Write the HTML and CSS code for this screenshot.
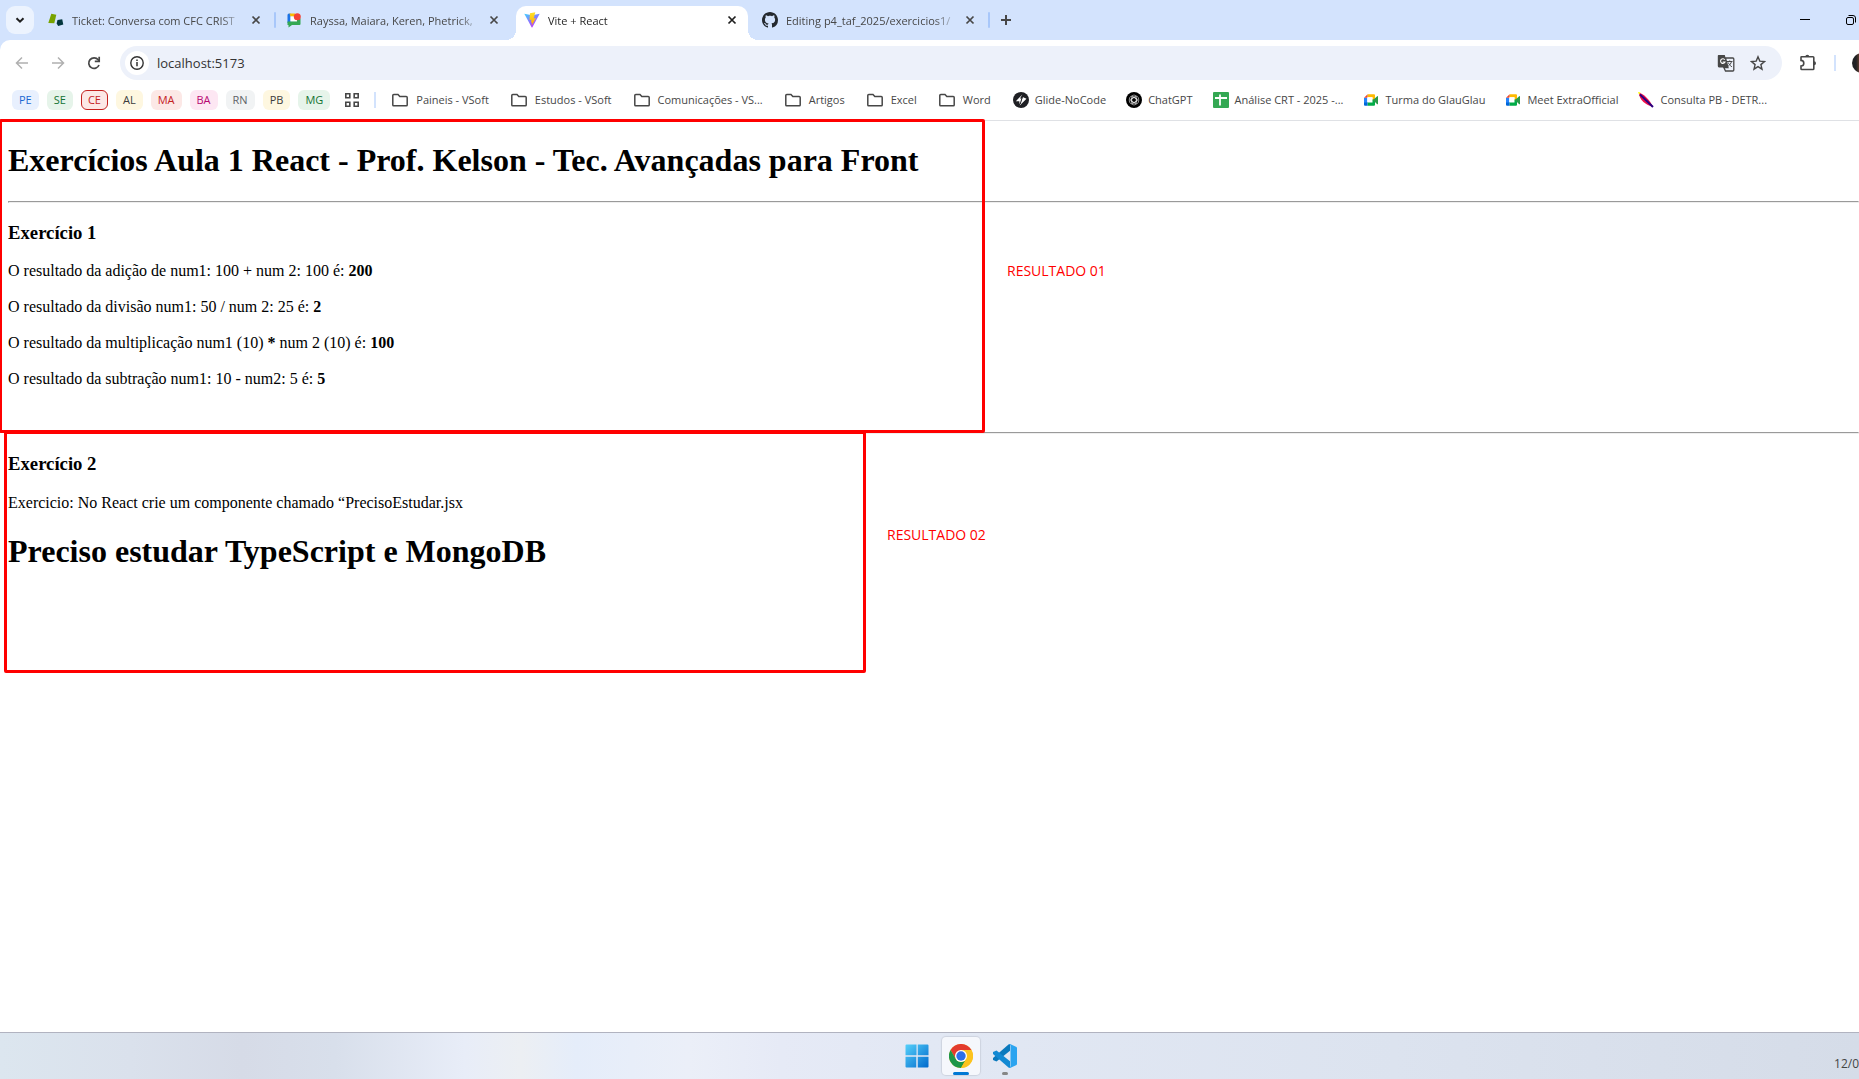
FILE: index.html
```html
<!DOCTYPE html>
<html lang="pt-BR">
<head>
<meta charset="utf-8">
<title>Vite + React</title>
<link rel="stylesheet" href="styles.css">
</head>
<body>
<svg class="defs" width="0" height="0" aria-hidden="true">
  <symbol id="close" viewBox="0 0 16 16"><path d="M4.5 4.5l7 7M11.500 4.500l-7 7" fill="none" stroke="currentColor" stroke-width="1.700"/></symbol>
  <symbol id="folder" viewBox="0 0 16 16"><path d="M.8 13V3.500a1 1 0 0 1 1-1H6l1.800 2h6.400a1 1 0 0 1 1 1V13a.8.8 0 0 1-.8.8H1.600A.8.800 0 0 1 .8 13z" fill="none" stroke="#474747" stroke-width="1.500"/></symbol>
  <symbol id="meet" viewBox="0 0 16 16"><path d="M1 5.800h3.500V11H1z" fill="#2684fc"/><path d="M1 5.800L4.700 2.300v3.500z" fill="#ea4335"/><path d="M4.700 2.300h6.300a1 1 0 0 1 1 1v4.200L9.500 8.500V5.300H4.700z" fill="#ffba00"/><path d="M4.200 5.300h5.300v5.200H4.200z" fill="#fff"/><path d="M1 10.500h3.700v3.300H2a1 1 0 0 1-1-1z" fill="#0066da"/><path d="M4.700 10.500h4.800V7.500H12v5.300a1 1 0 0 1-1 1H4.700z" fill="#00ac47"/><path d="M10 8l4.200-3.800c.4-.3.800-.1.800.4v7.200c0 .5-.4.700-.8.400z" fill="#2c9a48"/></symbol>
</svg>

<header class="browser">
  <div class="tabstrip">
    <button class="tab-search" aria-label="Pesquisar guias"><svg width="12" height="12" viewBox="0 0 12 12"><path d="M2.500 4.200L6 7.700l3.500-3.500" fill="none" stroke="#1f1f1f" stroke-width="2"/></svg></button>
    <nav class="tabs">
      <div class="tab">
        <svg class="ico" viewBox="0 0 16 16"><path d="M3.300 1.800l5 1-2 8.500-6-.3z" fill="#78a300"/><path d="M9.500 8l4.700-.8 1.100 5.200-5.100 1.500-1.600-2.400z" fill="#03363d"/></svg>
        <a class="tab-title" href="#">Ticket: Conversa com CFC CRIST</a>
        <button class="tab-close" aria-label="Fechar"><svg class="ico"><use href="#close"/></svg></button>
      </div>
      <span class="tab-sep line"></span>
      <div class="tab">
        <svg class="ico" viewBox="0 0 16 16"><path d="M1.500 3a1.500 1.500 0 0 1 1.500-1.500h1.500V11h-3z" fill="#1a73e8"/><path d="M3.500 1.500H9v3H4.500z" fill="#fbbc04"/><path d="M4.500 4.500H11V9.500H4.500z" fill="#fff"/><path d="M1.500 9.500h9.500V6.500h3.500V12a1 1 0 0 1-1 1H6l-3.500 2.500V13h-1z" fill="#34a853"/><circle cx="11.300" cy="4.700" r="3.500" fill="#f44336"/></svg>
        <a class="tab-title" href="#">Rayssa, Maiara, Keren, Phetrick,</a>
        <button class="tab-close" aria-label="Fechar"><svg class="ico"><use href="#close"/></svg></button>
      </div>
      <span class="tab-sep"></span>
      <div class="tab active">
        <svg class="ico" viewBox="0 0 16 16"><defs><linearGradient id="v" x1="0" y1="0" x2=".6" y2="1"><stop stop-color="#41d1ff"/><stop offset="1" stop-color="#bd34fe"/></linearGradient><linearGradient id="b" x1="0" y1="0" x2="0" y2="1"><stop stop-color="#ffe227"/><stop offset="1" stop-color="#ffa800"/></linearGradient></defs><path d="M.3 1.800L8 3.200l7.700-1.400L8.400 15.300a.5.500 0 0 1-.8 0z" fill="url(#v)"/><path d="M11.300.3L6 1.300l-.5 6.800 2-.4-.6 3 1.300-.4-.6 3.400L12 6l-2.300.4z" fill="url(#b)"/></svg>
        <a class="tab-title" href="#">Vite + React</a>
        <button class="tab-close" aria-label="Fechar"><svg class="ico"><use href="#close"/></svg></button>
      </div>
      <span class="tab-sep"></span>
      <div class="tab">
        <svg class="ico" viewBox="0 0 16 16"><path fill="#24292f" d="M8 0C3.580 0 0 3.580 0 8c0 3.540 2.290 6.530 5.470 7.590.4.070.55-.17.55-.38 0-.19-.01-.82-.01-1.490-2.010.37-2.530-.49-2.690-.94-.09-.23-.48-.94-.82-1.130-.28-.15-.68-.52-.01-.53.63-.01 1.080.58 1.230.82.72 1.210 1.870.87 2.330.66.070-.52.280-.87.510-1.070-1.780-.2-3.640-.89-3.640-3.950 0-.87.310-1.590.82-2.150-.08-.2-.36-1.020.08-2.120 0 0 .67-.21 2.200.82.640-.18 1.320-.27 2-.27s1.360.09 2 .27c1.530-1.040 2.200-.82 2.200-.82.440 1.100.16 1.920.08 2.120.51.560.82 1.270.82 2.150 0 3.070-1.870 3.750-3.650 3.950.29.25.54.73.54 1.480 0 1.070-.01 1.930-.01 2.200 0 .21.150.46.550.38A8.010 8.010 0 0 0 16 8c0-4.420-3.580-8-8-8z"/></svg>
        <a class="tab-title" href="#">Editing p4_taf_2025/exercicios1/</a>
        <button class="tab-close" aria-label="Fechar"><svg class="ico"><use href="#close"/></svg></button>
      </div>
      <span class="tab-sep line"></span>
    </nav>
    <button class="new-tab" aria-label="Nova guia"><svg class="ico" viewBox="0 0 16 16"><path d="M8 3v10M3 8h10" stroke="#474747" stroke-width="2"/></svg></button>
    <div class="window-controls">
      <button aria-label="Minimizar"><svg width="12" height="12" viewBox="0 0 12 12"><path d="M1 5.500h10" stroke="#000"/></svg></button>
      <button aria-label="Restaurar"><svg width="12" height="12" viewBox="0 0 12 12"><rect x="1.500" y="3.500" width="7" height="7" rx="1.500" fill="none" stroke="#000"/><path d="M3.500 1.500H8A2.500 2.500 0 0 1 10.500 4v4.500" fill="none" stroke="#000"/></svg></button>
    </div>
  </div>

  <div class="chrome-panel">
    <div class="toolbar">
      <button class="tool faded" aria-label="Voltar"><svg class="ico" viewBox="0 0 16 16"><path d="M14 8H3M8 2.500L2.500 8 8 13.500" fill="none" stroke="currentColor" stroke-width="1.500"/></svg></button>
      <button class="tool faded" aria-label="Avançar"><svg class="ico" viewBox="0 0 16 16"><path d="M2 8h11M8 2.500L13.500 8 8 13.500" fill="none" stroke="currentColor" stroke-width="1.500"/></svg></button>
      <button class="tool" aria-label="Recarregar"><svg class="ico" viewBox="0 0 16 16"><path d="M13 10a5.300 5.300 0 1 1-.8-5.200L13 5.800" fill="none" stroke="currentColor" stroke-width="1.700"/><path d="M13.200 1.800v4.500H8.800" fill="none" stroke="currentColor" stroke-width="1.700"/></svg></button>
      <div class="omnibox">
        <button class="site-info" aria-label="Informações do site"><svg class="ico" viewBox="0 0 16 16"><circle cx="8" cy="8" r="6.200" fill="none" stroke="#333" stroke-width="1.400"/><path d="M8 7v4.200M8 4.500v1.500" stroke="#333" stroke-width="1.500"/></svg></button>
        <input class="url" type="text" value="localhost:5173" aria-label="Endereço">
        <button class="omni-btn" aria-label="Traduzir"><svg width="18" height="18" viewBox="0 0 18 18"><path d="M1.500 1h6.300l3.200 12.500H2A1.500 1.500 0 0 1 .8 12V2A1 1 0 0 1 1.500 1z" fill="#474747"/><path d="M8.500 4h7.300a1 1 0 0 1 1 1v11a1 1 0 0 1-1 1H8.500L6.800 13.500h4.200z" fill="#edf1fa" stroke="#474747" stroke-width="1.300"/><path d="M7.800 5.800A2.300 2.300 0 1 0 8 8H5.700" fill="none" stroke="#fff" stroke-width="1.100"/><path d="M10 7.500h5.500M12.700 6.500v1M14.500 7.500c-.5 2-1.700 3.500-3.200 4.500M11.200 8.500c.7 1.700 2 3.200 3.700 4.300" stroke="#474747" fill="none"/></svg></button>
        <button class="omni-btn" aria-label="Favoritar"><svg class="ico" viewBox="0 0 16 16"><path d="M8 1.800l1.800 4.300 4.700.4-3.600 3.100 1.100 4.600L8 11.700l-4 2.500 1.100-4.600L1.500 6.500l4.700-.4z" fill="none" stroke="#474747" stroke-width="1.400"/></svg></button>
      </div>
      <button class="tool" aria-label="Extensões"><svg width="18" height="18" viewBox="0 0 18 18"><path d="M2.500 2.800H14a.8.800 0 0 1 .8.800V14.700a.8.800 0 0 1-.8.800H2.800a.8.800 0 0 1-.8-.8V12a2.800 2.800 0 0 0 0-5.600V3.300a.5.500 0 0 1 .5-.5z" fill="none" stroke="#474747" stroke-width="1.600"/><path d="M6.300 2.800a2 2 0 0 1 4 0zM15 7.200a2 2 0 0 1 0 4z" fill="#474747"/></svg></button>
      <span class="tool-sep"></span>
      <span class="avatar"></span>
    </div>

    <nav class="bookmarks">
      <div class="groups">
        <a class="chip blue" href="#">PE</a><a class="chip green" href="#">SE</a><a class="chip red open" href="#">CE</a><a class="chip yellow" href="#">AL</a><a class="chip red" href="#">MA</a><a class="chip pink" href="#">BA</a><a class="chip grey" href="#">RN</a><a class="chip yellow" href="#">PB</a><a class="chip green" href="#">MG</a>
      </div>
      <button class="apps" aria-label="Grupos de guias"><svg class="ico" viewBox="0 0 16 16"><path d="M1.800 1.800h4v4h-4zM10.200 1.800h4v4h-4zM1.800 10.200h4v4h-4zM10.200 10.200h4v4h-4z" fill="none" stroke="#474747" stroke-width="1.600"/></svg></button>
      <span class="bar-sep"></span>
      <div class="links">
        <a class="mark folder" href="#"><svg class="ico"><use href="#folder"/></svg>Paineis - VSoft</a>
        <a class="mark folder" href="#"><svg class="ico"><use href="#folder"/></svg>Estudos - VSoft</a>
        <a class="mark folder" href="#"><svg class="ico"><use href="#folder"/></svg>Comunicações - VS...</a>
        <a class="mark folder" href="#"><svg class="ico"><use href="#folder"/></svg>Artigos</a>
        <a class="mark folder" href="#"><svg class="ico"><use href="#folder"/></svg>Excel</a>
        <a class="mark folder" href="#"><svg class="ico"><use href="#folder"/></svg>Word</a>
        <a class="mark" href="#"><svg class="ico" viewBox="0 0 16 16"><circle cx="8" cy="8" r="8" fill="#1f2024"/><path d="M9.300 2.500L2.800 9.300h3.500L6.500 12l1.300-1.300L9 6.500H7z" fill="#fff"/><path d="M9.700 5l3.800 1.700-6.800 6.800 1.700-4.600z" fill="#fff"/><path d="M9.800 3.500L7.200 12" stroke="#1f2024"/></svg>Glide-NoCode</a>
        <a class="mark" href="#"><svg class="ico" viewBox="0 0 16 16"><circle cx="8" cy="8" r="8" fill="#000"/><g fill="none" stroke="#ddd" stroke-width=".6"><rect x="5.500" y="3" width="5" height="7.500" rx="2.500"/><rect x="5.500" y="3" width="5" height="7.500" rx="2.500" transform="rotate(60 8 8)"/><rect x="5.500" y="3" width="5" height="7.500" rx="2.500" transform="rotate(120 8 8)"/><rect x="5.500" y="3" width="5" height="7.500" rx="2.500" transform="rotate(180 8 8)"/><rect x="5.500" y="3" width="5" height="7.500" rx="2.500" transform="rotate(240 8 8)"/><rect x="5.500" y="3" width="5" height="7.500" rx="2.500" transform="rotate(300 8 8)"/></g></svg>ChatGPT</a>
        <a class="mark" href="#"><svg class="ico" viewBox="0 0 16 16"><rect width="16" height="16" rx="1" fill="#34a853"/><path d="M2 6h12M7 2.500v11" stroke="#fff" stroke-width="1.800"/></svg>Análise CRT - 2025 -...</a>
        <a class="mark" href="#"><svg class="ico"><use href="#meet"/></svg>Turma do GlauGlau</a>
        <a class="mark" href="#"><svg class="ico"><use href="#meet"/></svg>Meet ExtraOfficial</a>
        <a class="mark" href="#"><svg class="ico" viewBox="0 0 16 16"><path d="M1 1c4 0 11 7 14 14C8 13 1 8 1 1z" fill="#f0104a"/><path d="M2 2.500l13 12.500" stroke="#2a0080" stroke-width="2"/><path d="M0 0l2.500.5L1 2.500z" fill="#ff0"/></svg>Consulta PB - DETR...</a>
      </div>
    </nav>
  </div>
</header>

<main class="page">
  <h1>Exercícios Aula 1 React - Prof. Kelson - Tec. Avançadas para Front</h1>
  <hr>
  <h3>Exercício 1</h3>
  <p>O resultado da adição de num1: 100 + num 2: 100 é: <b>200</b></p>
  <p>O resultado da divisão num1: 50 / num 2: 25 é: <b>2</b></p>
  <p>O resultado da multiplicação num1 (10) <b>*</b> num 2 (10) é: <b>100</b></p>
  <p>O resultado da subtração num1: 10 - num2: 5 é: <b>5</b></p>
  <br>
  <hr>
  <h3>Exercício 2</h3>
  <p>Exercicio: No React crie um componente chamado “PrecisoEstudar.jsx</p>
  <h1>Preciso estudar TypeScript e MongoDB</h1>

  <div class="frame frame-1"></div>
  <div class="frame frame-2"></div>
  <span class="note note-1">RESULTADO 01</span>
  <span class="note note-2">RESULTADO 02</span>
</main>

<footer class="taskbar">
  <div class="apps-row">
    <button class="app" aria-label="Iniciar"><svg width="24" height="24" viewBox="0 0 24 24"><defs><linearGradient id="w" x1="0" y1="0" x2="1" y2="1"><stop stop-color="#55d0fa"/><stop offset="1" stop-color="#0069cc"/></linearGradient></defs><path d="M1.500.500H12v11H.5v-10a1 1 0 0 1 1-1zM12.500.500h10a1 1 0 0 1 1 1v10h-11zM.5 12.500h11v11h-10a1 1 0 0 1-1-1zM12.500 12.500h11v10a1 1 0 0 1-1 1h-10z" fill="url(#w)"/><path d="M12 0v24M0 12h24" stroke="#e1e7f3"/></svg></button>
    <button class="app current" aria-label="Google Chrome"><svg width="24" height="24" viewBox="0 0 24 24"><circle cx="12" cy="12" r="12" fill="#fcc934"/><path d="M12 6h10.400A12 12 0 0 0 1.600 6l5.200 9z" fill="#e33b2e"/><path d="M1.600 6A12 12 0 0 0 12 24l5.200-9A6 6 0 0 1 6.800 15z" fill="#1e9648"/><path d="M22.400 6H12l5.200 9L12 24A12 12 0 0 0 22.400 6z" fill="#fcc31e"/><circle cx="12" cy="12" r="6" fill="#fff"/><circle cx="12" cy="12" r="4.700" fill="#2c6fea"/></svg></button>
    <button class="app idle" aria-label="Visual Studio Code"><svg width="24" height="24" viewBox="0 0 24 24"><path d="M17 0v6.800L3.500 17.500 0 16v-2L15.500.5z" fill="#0a79bd"/><path d="M17 24v-6.800L3.500 6.500 0 8v2l15.500 13.500z" fill="#1289d3"/><path d="M17 0l6 2.700a1.700 1.700 0 0 1 1 1.500v15.600a1.700 1.700 0 0 1-1 1.500L17 24c-.8 0-1.500-.3-2-.8.900.7 2.500.1 2.500-1.200V2c0-1.300-1.600-1.900-2.500-1.200.5-.5 1.200-.8 2-.8z" fill="#2ba4f0"/></svg></button>
  </div>
  <time class="clock">12/0</time>
</footer>
</body>
</html>
```
FILE: styles.css
```css
* { box-sizing: border-box; }

body {
  margin: 0;
  min-height: 100vh;
  display: flex;
  flex-direction: column;
  overflow: hidden;
  background: #fff;
  color: #000;
  font-family: "Liberation Serif", "Times New Roman", serif;
  font-size: 16px;
}

.defs { position: absolute; }

button {
  display: flex;
  align-items: center;
  justify-content: center;
  flex: none;
  padding: 0;
  border: 0;
  background: none;
  color: #474747;
}

a { color: inherit; text-decoration: none; }

.ico { width: 16px; height: 16px; flex: none; }

/* Browser chrome */
.browser {
  background: #d3e3fd;
  font-family: "Open Sans", "Noto Sans", sans-serif;
  font-size: 11px;
  color: #474747;
}

.tabstrip { display: flex; align-items: center; height: 40px; padding-left: 6px; }

.tab-search { width: 28px; height: 28px; border-radius: 9px; background: #ecf3fe; }

.tabs { display: flex; align-items: flex-end; height: 40px; margin-left: 6px; }

.tab {
  position: relative;
  display: flex;
  align-items: center;
  gap: 8px;
  width: 232px;
  height: 34px;
  padding: 0 8px 6px;
}

.tab.active {
  background: #fff;
  border-radius: 10px 10px 0 0;
  color: #1f1f1f;
}

.tab.active::before,
.tab.active::after {
  content: "";
  position: absolute;
  bottom: 0;
  width: 10px;
  height: 10px;
}
.tab.active::before { left: -10px; background: radial-gradient(circle at 0 0, transparent 10px, #fff 10px); }
.tab.active::after { right: -10px; background: radial-gradient(circle at 100% 0, transparent 10px, #fff 10px); }

.tab-title {
  flex: 1;
  padding-top: 2px;
  overflow: hidden;
  white-space: nowrap;
  line-height: 16px;
  mask-image: linear-gradient(to right, #000 148px, transparent 172px);
}

.tab-close { width: 16px; height: 16px; }
.tab.active .tab-close { color: #1f1f1f; }

.tab-sep { width: 2px; height: 16px; margin: 0 2px 12px; border-radius: 1px; }
.tab-sep.line { background: #a8c7fa; }

.new-tab { width: 28px; height: 28px; }

.window-controls { display: flex; gap: 34px; margin-left: auto; padding-right: 2px; }

.chrome-panel {
  background: #fff;
  border-radius: 10px 0 0 0;
  border-bottom: 1px solid #dfe1e5;
}

.toolbar { display: flex; align-items: center; height: 46px; padding-left: 8px; overflow: hidden; }

.tool { width: 28px; height: 28px; margin-right: 8px; }
.tool.faded { color: #b0b0b0; }

.omnibox {
  flex: 1;
  display: flex;
  align-items: center;
  height: 34px;
  margin: 0 12px 0 4px;
  padding: 0 12px 0 5px;
  border-radius: 17px;
  background: #edf1fa;
}

.site-info { width: 24px; height: 24px; border-radius: 50%; background: #fff; }

.url {
  flex: 1;
  min-width: 0;
  padding: 0 0 0 8px;
  border: 0;
  background: none;
  color: #333;
  font: 13px/20px "Open Sans", "Noto Sans", sans-serif;
}

.omni-btn { width: 24px; height: 24px; margin-left: 8px; }

.tool-sep { width: 2px; height: 16px; margin: 0 16px 0 4px; background: #d3e3fd; }

.avatar {
  flex: none;
  width: 20px;
  height: 20px;
  margin-right: -13px;
  border-radius: 50%;
  background: linear-gradient(to right, #202124 4px, #5a3a2c 7px, #14233b 10px);
}

.bookmarks { display: flex; align-items: center; height: 34px; padding: 0 0 6px 12px; }

.groups { display: flex; gap: 8px; }

.chip {
  height: 20px;
  padding: 0 6px;
  border: 1px solid transparent;
  border-radius: 6px;
  font-size: 11px;
  font-weight: 500;
  line-height: 18px;
}
.chip.blue { background: #e8f0fe; color: #1967d2; }
.chip.green { background: #e6f4ea; color: #137333; }
.chip.red { background: #fce8e6; color: #c5221f; }
.chip.yellow { background: #fef7e0; color: #3c3c3c; }
.chip.pink { background: #fde7f3; color: #b80672; }
.chip.grey { background: #f1f3f4; color: #5f6368; }
.chip.open { border-color: #c5221f; }

.apps { width: 16px; height: 16px; margin-left: 14px; }

.bar-sep { width: 2px; height: 16px; margin: 0 16px 0 14px; background: #d3e3fd; }

.links { display: flex; gap: 20px; }

.mark { display: flex; align-items: center; gap: 6px; white-space: nowrap; line-height: 16px; }
.mark.folder { gap: 8px; margin-right: 2px; }

/* Page content */
.page { position: relative; flex: 1; padding-left: 8px; }
.page p { margin: 18px 0; line-height: 18px; }

.frame { position: absolute; border: 3px solid #f00; border-radius: 2px; }
.frame-1 { left: -1px; top: -2px; width: 986px; height: 314px; }
.frame-2 { left: 4px; top: 310px; width: 862px; height: 242px; }

.note {
  position: absolute;
  color: #f00;
  font: 14px/20px "Open Sans", "Noto Sans", sans-serif;
}
.note-1 { left: 1007px; top: 140px; }
.note-2 { left: 887px; top: 404px; }

/* Taskbar */
.taskbar {
  display: grid;
  grid-template-columns: 1fr auto 1fr;
  align-items: center;
  height: 47px;
  border-top: 1px solid #b1b3c0;
  background: linear-gradient(to right, #dce6ef 0, #dae1ec 7%, #d6dbe7 13%, #d8dfeb 18%, #e8edf8 25%, #eceff3 28%, #e5edfa 31%, #ebeff8 37%, #e6eaf6 42%, #e2e8f4 50%, #dce3ef 75%, #d5dce8 100%);
}

.apps-row { grid-column: 2; display: flex; gap: 6px; margin-left: 62px; }

.app { position: relative; width: 38px; height: 38px; border-radius: 4px; }
.app.current { background: #f5f7fc; box-shadow: 0 0 1px 1px #ced3df; }
.app.current::after,
.app.idle::after {
  content: "";
  position: absolute;
  bottom: 0;
  width: 16px;
  height: 3px;
  border-radius: 2px;
  background: #0078d4;
}
.app.idle::after { width: 6px; background: #868686; }

.clock {
  justify-self: end;
  padding-top: 16px;
  color: #444;
  font: 12px/16px "Open Sans", "Noto Sans", sans-serif;
}
```
